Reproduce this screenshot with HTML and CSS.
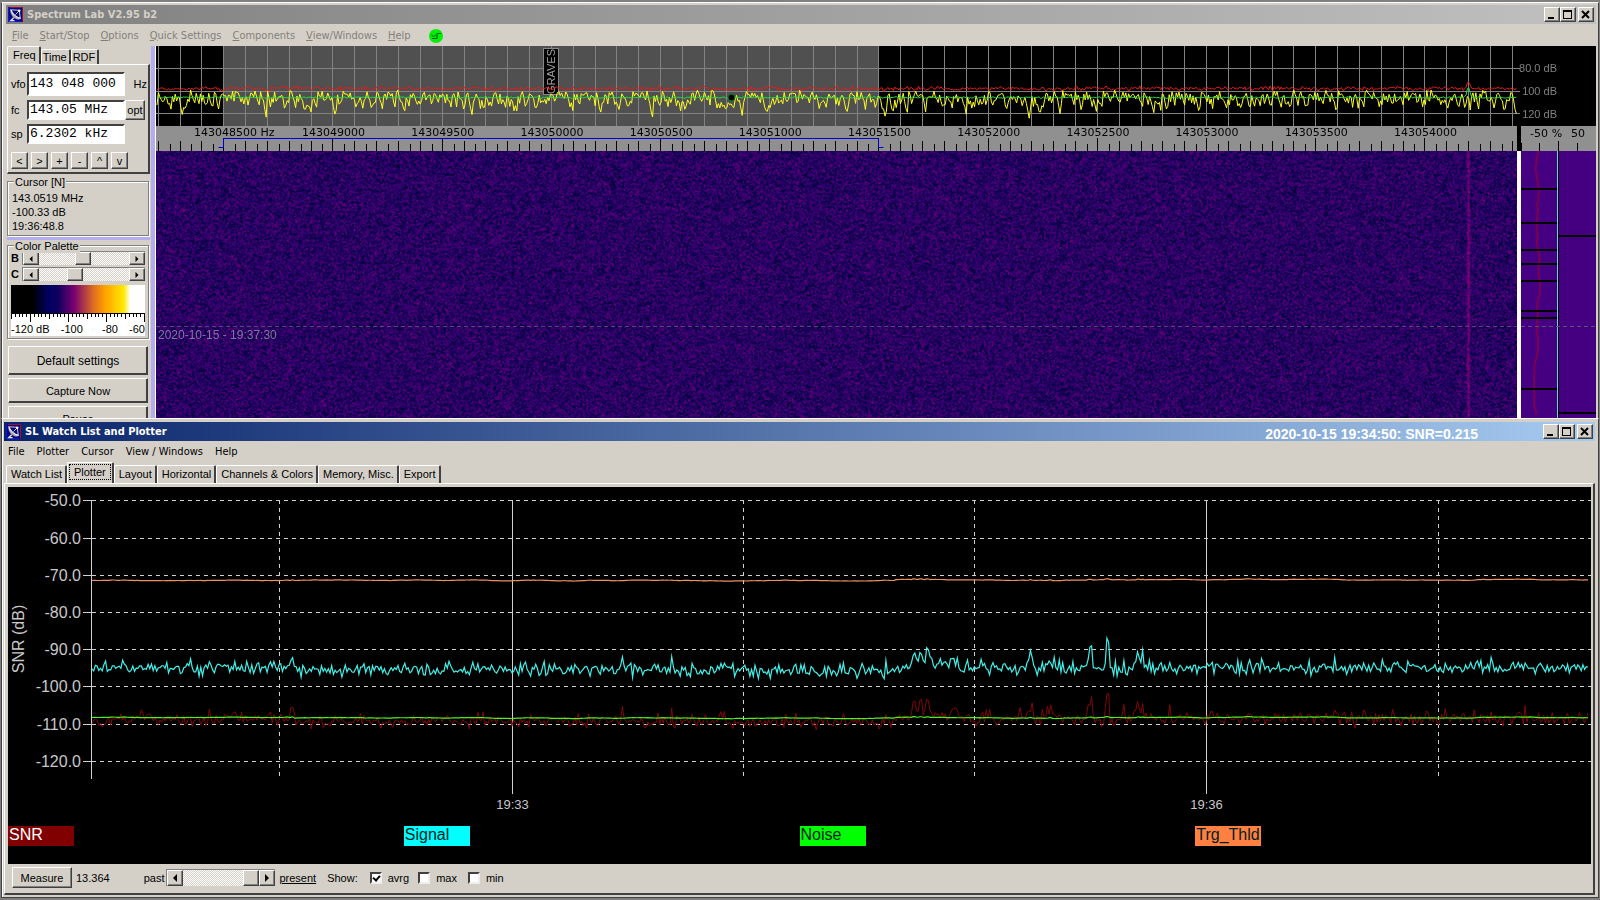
FILE: index.html
```html
<!DOCTYPE html>
<html lang="en">
<head>
<meta charset="utf-8">
<title>Spectrum Lab V2.95 b2</title>
<link rel="stylesheet" href="styles.css">
</head>
<body>
<svg class="defs" width="0" height="0" aria-hidden="true">
  <symbol id="dish" viewBox="0 0 16 16">
    <rect width="16" height="16" fill="#08087a"/>
    <path d="M2 .5h13.500v15" fill="none" stroke="#b01030"/>
    <path d="M.5 0v15.500H14" fill="none" stroke="#1414f0"/>
    <path d="M3 2c1 5 5 9.500 11 10-1 1.500-4 2-7 0S1.500 5 3 2z" fill="#a8a8a8"/>
    <path d="M3 2.500c1 4 5 8.500 10.500 9.500" fill="none" stroke="#f0f0f0" stroke-width="1.400"/>
    <path d="M6 11.500L3 14.500h4" fill="none" stroke="#e8e8e8" stroke-width="1.400"/>
    <path d="M8 8l4-4M4 3l8 .5 1 8" fill="none" stroke="#d8d8d8" stroke-width="1"/>
    <circle cx="12" cy="4" r="1.300" fill="#fff"/>
  </symbol>
  <symbol id="min" viewBox="0 0 12 11"><path d="M2 8h6v2H2z"/></symbol>
  <symbol id="max" viewBox="0 0 12 11"><path d="M1 1h9v9H1zM2 3v6h7V3z" fill-rule="evenodd"/></symbol>
  <symbol id="close" viewBox="0 0 12 11"><path d="M2 2l7 7M9 2L2 9" stroke="#000" stroke-width="2"/></symbol>
  <symbol id="left" viewBox="0 0 8 8"><path d="M6 0v8L2 4z"/></symbol>
  <symbol id="right" viewBox="0 0 8 8"><path d="M2 0v8l4-4z"/></symbol>
</svg>

<main class="desktop">
  <section class="window lab">
    <header class="titlebar inactive">
      <svg class="app-icon"><use href="#dish"/></svg>
      <h1>Spectrum Lab V2.95 b2</h1>
      <div class="win-buttons">
        <button aria-label="Minimize"><svg><use href="#min"/></svg></button>
        <button aria-label="Maximize"><svg><use href="#max"/></svg></button>
        <button class="close" aria-label="Close"><svg><use href="#close"/></svg></button>
      </div>
    </header>
    <nav class="menu muted">
      <a href="#"><u>F</u>ile</a><a href="#"><u>S</u>tart/Stop</a><a href="#"><u>O</u>ptions</a><a href="#"><u>Q</u>uick Settings</a><a href="#"><u>C</u>omponents</a><a href="#"><u>V</u>iew/Windows</a><a href="#"><u>H</u>elp</a>
      <svg class="status" viewBox="0 0 14 14"><circle cx="7" cy="7" r="7" fill="#0e0"/><path d="M2.500 5.500l2 2.500 2.500-2.500M3 9.500h5V4.500h4" fill="none" stroke="#053" stroke-width="1"/></svg>
    </nav>
    <div class="lab-body">
      <aside class="sidebar">
        <div class="tabs small">
          <button class="tab active">Freq</button><button class="tab">Time</button><button class="tab">RDF</button>
        </div>
        <div class="freq">
          <div class="field tall"><label for="vfo">vfo</label><input id="vfo" value="143 048 000"><span class="unit">Hz</span></div>
          <div class="field"><label for="fc">fc</label><input id="fc" value="143.05 MHz"><button class="btn opt">opt</button></div>
          <div class="field"><label for="sp">sp</label><input id="sp" value="6.2302 kHz"></div>
          <div class="steps">
            <button class="btn">&lt;</button><button class="btn">&gt;</button><button class="btn">+</button><button class="btn">-</button><button class="btn">^</button><button class="btn">v</button>
          </div>
        </div>
        <fieldset class="group cursor">
          <legend>Cursor [N]</legend>
          <p>143.0519 MHz</p><p>-100.33 dB</p><p>19:36:48.8</p>
        </fieldset>
        <fieldset class="group palette">
          <legend>Color Palette</legend>
          <div class="slider"><label for="b">B</label><div class="scroll"><button aria-label="Less brightness"><svg><use href="#left"/></svg></button><input id="b" type="range" value="49"><button aria-label="More brightness"><svg><use href="#right"/></svg></button></div></div>
          <div class="slider"><label for="c">C</label><div class="scroll"><button aria-label="Less contrast"><svg><use href="#left"/></svg></button><input id="c" type="range" value="38"><button aria-label="More contrast"><svg><use href="#right"/></svg></button></div></div>
          <div class="ramp"></div>
          <div class="scale">
            <canvas id="scale"></canvas>
            <div class="scale-text"><span>-120 dB</span><span>-100</span><span>-80</span><span>-60</span></div>
          </div>
        </fieldset>
        <div class="actions">
          <button class="btn default">Default settings</button>
          <button class="btn">Capture Now</button>
          <button class="btn">Pause</button>
        </div>
      </aside>
      <div class="analyzer">
        <div class="spectrum">
          <canvas id="spectrum"></canvas>
          <span class="marker">GRAVES</span>
          <ul class="levels"><li>80.0 dB</li><li>100 dB</li><li>120 dB</li></ul>
          <canvas id="traces"></canvas>
        </div>
        <div class="ruler">
          <canvas id="ruler"></canvas>
          <svg class="overlay">
            <text class="first" x="2.79%" y="10">143048500 Hz</text>
            <text x="13.05%" y="10">143049000</text><text x="21.07%" y="10">143049500</text>
            <text x="29.09%" y="10">143050000</text><text x="37.12%" y="10">143050500</text>
            <text x="45.14%" y="10">143051000</text><text x="53.16%" y="10">143051500</text>
            <text x="61.19%" y="10">143052000</text><text x="69.21%" y="10">143052500</text>
            <text x="77.23%" y="10">143053000</text><text x="85.26%" y="10">143053500</text>
            <text x="93.28%" y="10">143054000</text>
          </svg>
        </div>
        <div class="gap dark"></div>
        <div class="ruler">
          <svg class="overlay">
            <text x="18" y="11">-50</text><text x="36" y="11">%</text><text x="57" y="11">50</text>
            <path d="M.5 17v8M18.500 17v8M37.500 15v10M56.500 17v8" stroke="#000"/>
          </svg>
        </div>
        <div class="waterfall"><canvas id="waterfall"></canvas><time>2020-10-15 - 19:37:30</time></div>
        <div class="gap light"></div>
        <div class="phase"><canvas id="phase"></canvas></div>
      </div>
    </div>
  </section>

  <section class="window plotter">
    <header class="titlebar">
      <svg class="app-icon"><use href="#dish"/></svg>
      <h2>SL Watch List and Plotter</h2>
      <span class="readout">2020-10-15 19:34:50: SNR=0.215</span>
      <div class="win-buttons">
        <button aria-label="Minimize"><svg><use href="#min"/></svg></button>
        <button aria-label="Maximize"><svg><use href="#max"/></svg></button>
        <button class="close" aria-label="Close"><svg><use href="#close"/></svg></button>
      </div>
    </header>
    <nav class="menu">
      <a href="#">File</a><a href="#">Plotter</a><a href="#">Cursor</a><a href="#">View / Windows</a><a href="#">Help</a>
    </nav>
    <div class="tabs">
      <button class="tab">Watch List</button><button class="tab active focus"><span>Plotter</span></button><button class="tab">Layout</button><button class="tab">Horizontal</button><button class="tab">Channels &amp; Colors</button><button class="tab">Memory, Misc.</button><button class="tab">Export</button>
    </div>
    <div class="page">
      <div class="plot">
        <svg class="chart">
          <g class="grid">
            <path d="M75 13.500h9M75 51.500h9M75 88.500h9M75 125.500h9M75 162.500h9M75 199.500h9M75 237.500h9M75 274.500h9M83.500 13v279"/>
            <g class="dash">
              <line x1="84" x2="100%" y1="13.500" y2="13.500"/><line x1="84" x2="100%" y1="51.500" y2="51.500"/>
              <line x1="84" x2="100%" y1="88.500" y2="88.500"/><line x1="84" x2="100%" y1="125.500" y2="125.500"/>
              <line x1="84" x2="100%" y1="162.500" y2="162.500"/><line x1="84" x2="100%" y1="199.500" y2="199.500"/>
              <line x1="84" x2="100%" y1="237.500" y2="237.500"/><line x1="84" x2="100%" y1="274.500" y2="274.500"/>
              <line x1="17.150%" x2="17.150%" y1="13" y2="293"/><line x1="46.460%" x2="46.460%" y1="13" y2="293"/>
              <line x1="61.060%" x2="61.060%" y1="13" y2="293"/><line x1="90.370%" x2="90.370%" y1="13" y2="293"/>
            </g>
            <line x1="31.870%" x2="31.870%" y1="13" y2="307"/><line x1="75.710%" x2="75.710%" y1="13" y2="307"/>
          </g>
          <g class="db">
            <text x="73" y="19">-50.0</text><text x="73" y="57">-60.0</text><text x="73" y="94">-70.0</text><text x="73" y="131">-80.0</text>
            <text x="73" y="168">-90.0</text><text x="73" y="205">-100.0</text><text x="73" y="243">-110.0</text><text x="73" y="280">-120.0</text>
          </g>
          <text class="axis" transform="translate(16 152) rotate(-90)">SNR (dB)</text>
          <g class="times"><text x="31.870%" y="322">19:33</text><text x="75.710%" y="322">19:36</text></g>
        </svg>
        <canvas id="history"></canvas>
        <ul class="legend"><li class="snr">SNR</li><li class="signal">Signal</li><li class="noise">Noise</li><li class="thld">Trg_Thld</li></ul>
      </div>
      <footer class="controls">
        <button class="btn measure">Measure</button><output>13.364</output>
        <label class="past" for="pos">past</label>
        <div class="scroll big"><button aria-label="Back"><svg><use href="#left"/></svg></button><input id="pos" type="range" value="100"><button aria-label="Forward"><svg><use href="#right"/></svg></button></div>
        <a class="present" href="#">present</a>
        <span class="show">Show:</span>
        <label class="check"><input type="checkbox" checked>avrg</label>
        <label class="check"><input type="checkbox">max</label>
        <label class="check"><input type="checkbox">min</label>
      </footer>
    </div>
  </section>
</main>
<script src="plots.js"></script>
</body>
</html>
```
FILE: styles.css
```css
:root {
  --face: #d4d0c8;
  --shade: #808080;
  --dark: #404040;
  --lilac: #b4acf0;
  --ui: "DejaVu Sans Condensed", "DejaVu Sans", sans-serif;
  --form: "Liberation Sans", Arial, sans-serif;
}
* { box-sizing: border-box; margin: 0; padding: 0; }
body { font: 11px/14px var(--form); color: #000; background: var(--shade); overflow: hidden; }
button, input { font: inherit; color: inherit; border: 0; border-radius: 0; }
a { color: inherit; text-decoration: none; }
ul { list-style: none; }
canvas { display: block; width: 100%; height: 100%; }
.defs { position: absolute; }

.desktop { display: flex; flex-direction: column; height: 100vh; padding: 2px 1px 2px 1px; }
.window { background: var(--face); border: 1px solid var(--dark); border-top: 1px solid #fff; box-shadow: inset 1px 0 #fff; }
.lab { flex: 1; min-height: 0; display: flex; flex-direction: column; overflow: hidden; padding: 2px 2px 0 4px; border-bottom: 0; }
.plotter { flex: none; padding: 3px 3px 2px 2px; }

.titlebar { flex: none; display: flex; align-items: center; height: 19px; padding: 0 2px; color: #fff; background: linear-gradient(90deg, #0a246a, #a6caf0); }
.titlebar.inactive { color: #d4d0c8; background: linear-gradient(90deg, #808080, #c0c0c0); }
.titlebar h1, .titlebar h2 { font: bold 11px/14px var(--ui); padding-top: 1px; }
.app-icon { width: 15px; height: 15px; margin-right: 4px; }
.readout { font: bold 14px/18px var(--form); margin-left: auto; padding-top: 5px; padding-right: 65px; }
.inactive .win-buttons { margin-left: auto; }
.win-buttons { display: flex; }
.win-buttons button, .btn, .scroll button {
  background: var(--face);
  border: 1px solid; border-color: #fff var(--dark) var(--dark) #fff;
  box-shadow: inset -1px -1px var(--shade);
}
.win-buttons button { width: 16px; height: 15px; color: #000; display: flex; }
.win-buttons svg { width: 12px; height: 11px; margin: 1px; }
.win-buttons .close { margin-left: 2px; }

.menu { flex: none; display: flex; align-items: center; gap: 11px; height: 22px; padding: 1px 6px 0; font: 11px/14px var(--ui); }
.plotter .menu { padding: 1px 4px 0; height: 21px; gap: 12px; }
.muted { color: #848078; }
.status { width: 14px; height: 14px; margin-left: 7px; }

.tabs { display: flex; align-items: flex-end; height: 21px; padding-left: 2px; }
.tabs.small { height: 18px; padding-left: 0; }
.tab { height: 18px; padding: 0 3px 1px 4px; background: var(--face); border-top: 1px solid #fff; border-left: 1px solid #fff; border-right: 2px solid var(--dark); border-top-left-radius: 2px; border-top-right-radius: 2px; white-space: nowrap; }
.tab.active { height: 21px; padding-bottom: 4px; }
.small .tab { height: 15px; padding: 0 2px 0 1px; }
.small .tab.active { height: 18px; padding: 0 3px 2px 5px; }
.tab.focus { padding: 0 1px 2px 1px; }
.focus span { display: block; padding: 0 4px; border: 1px dotted #000; }

.lab-body { flex: 1; min-height: 0; display: flex; }
.sidebar { flex: none; width: 149px; background: var(--face); border-right: 4px solid var(--lilac); padding-left: 1px; padding-right: 1px; }
.freq { border: 1px solid #fff; border-right: 2px solid var(--dark); border-bottom: 2px solid var(--dark); padding: 7px 0 4px 3px; margin-bottom: 2px; height: 110px; }
.field { display: flex; align-items: center; height: 20px; margin-bottom: 4px; }
.field.tall { height: 24px; }
.field label { width: 16px; flex: none; }
.field input { flex: none; width: 98px; height: 100%; padding: 0 1px 2px 1px; background: #fff; font: 13px/16px "Liberation Mono", monospace; border: 2px solid; border-color: var(--dark) #fff #fff var(--dark); }
.unit { margin-left: auto; padding-right: 1px; }
.opt { width: 20px; height: 20px; }
.steps { display: flex; gap: 3px; padding-top: 4px; }
.steps .btn { width: 17px; height: 17px; line-height: 12px; }
.group { position: relative; min-width: 0; border: 1px solid var(--shade); box-shadow: 1px 1px #fff, inset 1px 1px #fff; margin-right: 1px; }
.group legend { position: absolute; top: -6px; left: 6px; padding: 0 1px; background: var(--face); line-height: 13px; }
.cursor { margin-top: 7px; padding: 9px 4px 2px; }
.cursor::after { content: ""; position: absolute; left: -1px; right: -2px; bottom: -5px; height: 3px; background: var(--lilac); }
.palette { margin-top: 9px; padding: 5px 3px 2px; }
.slider { display: flex; align-items: center; height: 14px; margin-bottom: 2px; }
.slider label { width: 11px; font-weight: bold; }
.scroll { flex: 1; min-width: 0; display: flex; height: 14px; border-top: 1px solid var(--shade); border-left: 1px solid var(--shade); }
.scroll button { flex: none; width: 16px; display: flex; align-items: center; justify-content: center; }
.scroll svg { width: 6px; height: 6px; }
.scroll input { appearance: none; flex: 1; min-width: 0; width: 0; height: 100%; background: repeating-conic-gradient(#fff 0 25%, var(--face) 0 50%) 0 0 / 2px 2px; }
.scroll input::-webkit-slider-thumb { appearance: none; width: 16px; height: 13px; background: var(--face); border: 1px solid; border-color: #fff var(--dark) var(--dark) #fff; box-shadow: inset -1px -1px var(--shade); }
.scroll.big { flex: none; width: 109px; height: 17px; }
.scroll.big svg { width: 8px; height: 8px; }
.scroll.big input::-webkit-slider-thumb { height: 16px; }
.ramp { height: 28px; margin-top: 4px; background: linear-gradient(90deg, #000 0 16%, #000060 28%, #100060 35%, #780070 47%, #e07020 62%, #ffa000 70%, #ffe800 84%, #fff 89%); }
.scale { height: 23px; background: #fff; }
.scale canvas { height: 9px; }
.scale-text { display: flex; justify-content: space-between; line-height: 14px; }
.scale-text span:nth-child(3) { margin-left: 8px; }
.actions { display: flex; flex-direction: column; gap: 3px; padding: 7px 2px 0 1px; }
.actions .btn { flex: none; height: 25px; line-height: 14px; box-shadow: inset -1px -1px var(--dark); }
.actions .default { height: 29px; font-size: 12px; }

.analyzer { flex: 1; min-width: 0; display: grid; grid-template-columns: minmax(0, 1fr) 4px 75px; grid-template-rows: 80px 25px minmax(0, 1fr); border-left: 1px solid #fff; }
.spectrum { grid-column: 1 / -1; position: relative; background: #000; }
#traces { position: absolute; inset: 0; }
.marker { position: absolute; left: 26.9%; top: 2px; height: 47px; width: 16px; writing-mode: vertical-rl; transform: rotate(180deg); color: #a0a0a0; background: #000; border: 1px solid #888; line-height: 14px; }
.levels { position: absolute; right: 39px; top: 15px; color: #808080; text-align: right; }
.levels li { height: 23px; }
.ruler { position: relative; background: #909090; }
.overlay { position: absolute; inset: 0; width: 100%; height: 100%; font: 11px "DejaVu Sans", sans-serif; text-anchor: middle; }
.first { text-anchor: start; }
.dark { background: #000; }
.light { background: #fff; }
.waterfall { position: relative; }
.waterfall time { position: absolute; left: 2px; top: 177px; font-size: 12px; color: #8078a0; }

.page { border-top: 1px solid #fff; border-left: 1px solid #fff; border-right: 2px solid var(--dark); border-bottom: 2px solid var(--dark); padding: 3px 2px 0 3px; }
.plot { position: relative; background: #000; padding-bottom: 18px; }
.chart { display: block; width: 100%; height: 339px; fill: #c8c8c8; }
.grid { stroke: #d0d0d0; fill: none; }
.grid line { shape-rendering: crispEdges; }
.dash { stroke-dasharray: 4 4; }
.db { font-size: 16px; text-anchor: end; }
.axis { font-size: 16px; text-anchor: middle; }
.times { font-size: 13px; text-anchor: middle; }
#history { position: absolute; left: 0; top: 0; height: 339px; }
.legend { display: grid; grid-template-columns: repeat(4, 1fr); font-size: 16px; line-height: 17px; color: #002020; }
.legend li { width: 66px; height: 20px; padding-left: 1px; }
.snr { background: #800000; color: #fff; }
.signal { background: #0ff; }
.noise { background: #0f0; }
.thld { background: #ff8040; }
.controls { display: flex; align-items: center; height: 29px; padding: 0 4px 2px; }
.measure { width: 60px; height: 21px; margin-right: 4px; }
.past { margin-left: 34px; margin-right: 2px; }
.present { margin: 0 11px 0 4px; text-decoration: underline; }
.show { margin-right: 12px; }
.check { display: flex; align-items: center; gap: 6px; margin-right: 9px; }
.check:nth-last-child(2) { margin-right: 11px; }
.check input { appearance: none; position: relative; width: 12px; height: 12px; background: #fff; border: 2px solid; border-color: var(--dark) #eee #eee var(--dark); }
.check input:checked::after { content: ""; position: absolute; left: 2px; top: 0; width: 3px; height: 5px; border: solid #000; border-width: 0 2px 2px 0; transform: rotate(40deg); }
```
FILE: plots.js
```js
let seed = 7;
function rnd() {
  seed = (seed * 1664525 + 1013904223) >>> 0;
  return seed / 4294967296;
}
const gauss = () => rnd() + rnd() + rnd() + rnd() - 2;

function open(id) {
  const c = document.getElementById(id);
  c.width = c.clientWidth;
  c.height = c.clientHeight;
  return { g: c.getContext('2d'), w: c.width, h: c.height };
}
function line(g, color, pts, width = 1) {
  g.strokeStyle = color;
  g.lineWidth = width;
  g.beginPath();
  pts.forEach(([x, y]) => g.lineTo(x, y));
  g.stroke();
}

// 62.3 divisions of 100 Hz cover the displayed span
const RIGHT = 79;
const divX = (w, n) => Math.round(w * (0.0013 + n * 0.016047)) + 0.5;

function drawSpectrum() {
  const { g, w, h } = open('spectrum');
  const span = w - RIGHT;
  g.fillStyle = '#505050';
  g.fillRect(divX(span, 3), 0, divX(span, 33) - divX(span, 3), h);
  for (let n = 0; n <= 62; n++) line(g, '#828282', [[divX(span, n), 0], [divX(span, n), h]]);
  [22.5, 45.5, 67.5].forEach(y => line(g, '#828282', [[0, y], [span + 3, y]]));
}

function drawTraces() {
  const { g, w } = open('traces');
  const span = w - RIGHT, peak = span * 0.9643;
  const bump = (x, a) => a * Math.exp(-Math.pow((x - peak) / 2, 2));
  const red = [], green = [], yellow = [];
  let s = 0.5;
  for (let x = 1; x < span; x += 1.4) {
    s = 0.25 * s + 0.75 * -Math.log(1 - rnd() * 0.995);
    const y = 51 - 7.6 * Math.log(s + 0.02);
    yellow.push([x, Math.min(78, Math.max(44 + rnd() * 5, y)) - bump(x, 14)]);
    red.push([x, 42.5 + gauss() * 1.8 - bump(x, 6)]);
    green.push([x, 51.5 + gauss() * 0.7 - bump(x, 11)]);
  }
  line(g, '#f01818', red);
  line(g, '#ffff20', yellow);
  line(g, '#20e040', green);
  g.fillStyle = '#000';
  g.strokeStyle = '#108030';
  g.beginPath();
  g.arc(span * 0.4228, 51.5, 3.5, 0, 7);
  g.fill();
  g.stroke();
}

function drawRuler() {
  const { g, w, h } = open('ruler');
  for (let n = 0; n <= 62; n++) {
    const x = divX(w, n), half = Math.round((x + divX(w, n + 1)) / 2) + 0.5;
    line(g, '#000', [[x, (n + 2) % 5 ? 15 : 12], [x, h]]);
    if (half < w) line(g, '#000', [[half, 18], [half, h]]);
  }
  const a = divX(w, 3), b = divX(w, 33);
  line(g, '#0000d0', [[a - 5, 21.5], [a, 21.5], [a, 12.5], [b, 12.5], [b, 21.5], [b + 5, 21.5]]);
}

function drawWaterfall() {
  const { g, w, h } = open('waterfall');
  const img = g.createImageData(w, h);
  const raw = new Float32Array(w * h + w + 2);
  for (let i = 0; i < raw.length; i++) raw[i] = gauss();
  const px = Math.round(w * 0.9643);
  for (let y = 0; y < h; y++) for (let x = 0; x < w; x++) {
    const i = y * w + x;
    let v = 0.43 + 0.17 * (raw[i] + raw[i + 1] * 0.8 + raw[i + w] * 0.7 + raw[i + w + 1] * 0.6);
    const d = Math.abs(x - px);
    if (d < 3) v += [0.6, 0.42, 0.12][d] * (0.6 + 0.4 * rnd());
    v = Math.max(0, Math.min(1.2, v));
    const o = i * 4;
    img.data[o] = v < 0.25 ? 4 + v * 40 : 14 + (v - 0.25) * 140;
    img.data[o + 1] = 0;
    img.data[o + 2] = v < 0.5 ? 48 + v * 124 : 110;
    img.data[o + 3] = 255;
  }
  g.putImageData(img, 0, 0);
  g.setLineDash([4, 3]);
  line(g, '#504a70', [[0, 175.5], [w, 175.5]]);
}

function drawPhase() {
  const { g, w, h } = open('phase');
  g.fillStyle = '#440080';
  g.fillRect(0, 0, w, h);
  const wob = [];
  let x = 17;
  for (let y = 0; y < h; y += 3) {
    x = Math.max(13, Math.min(19, x + gauss() * 1.4));
    wob.push([x, y]);
  }
  line(g, '#7a0050', wob, 2);
  g.fillStyle = '#000';
  [37, 71, 98, 112, 129, 159, 166, 237].forEach(y => g.fillRect(0, y, 36, 2));
  [84, 261].forEach(y => g.fillRect(38, y, w - 38, 2));
  line(g, '#70d0e0', [[36.5, 0], [36.5, h]]);
  line(g, '#000', [[37.5, 0], [37.5, h]]);
  g.setLineDash([4, 3]);
  line(g, '#5a5478', [[0, 175.5], [w, 175.5]]);
}

function drawScale() {
  const { g, w } = open('scale');
  line(g, '#000', [[0, 0.5], [w, 0.5]]);
  for (let n = 0; n <= 35; n++) {
    const x = Math.round(n * 3.8) + 0.5, m = (n + 5) % 10;
    line(g, '#000', [[Math.min(x, w - 0.5), 0], [Math.min(x, w - 0.5), m === 0 ? 9 : m === 5 ? 6 : 4]]);
  }
}

// bursts: [fraction of plot width, height in pixels]
const BURSTS = [[0.1799, 12], [0.5725, 14], [0.5765, 16], [0.581, 17], [0.597, 7], [0.6456, 12], [0.6583, 12], [0.6835, 20], [0.6945, 30], [0.7136, 15], [0.7165, 12]];

function drawHistory() {
  const { g, w } = open('history');
  const cyan = [], red = [], green = [], orange = [];
  let slow = 0;
  for (let x = 84; x < w - 2; x += 1.7) {
    let b = 0;
    BURSTS.forEach(([p, a]) => { b = Math.max(b, a * Math.exp(-Math.pow((x - p * w) / 2, 2))); });
    const f = x / w;
    const base = f < 0.18 ? 181 : f < 0.56 ? 183.5 : f > 0.57 && f < 0.6 ? 177 : 181;
    slow = slow * 0.95 + gauss() * 0.16;
    const spike = rnd() > 0.9 ? rnd() * 9 : 0;
    cyan.push([x, base + gauss() * 5.5 - spike - b]);
    red.push([x, base + 51 + gauss() * 6 - spike * 1.2 - b]);
    const lift = b > 8 ? 0.6 : 0;
    green.push([x, 230.5 + slow - lift + (f > 0.18 && f < 0.56 ? 0.6 : 0)]);
    orange.push([x, 93.5 + slow - lift - (f > 0.56 ? 0.8 : 0)]);
  }
  line(g, '#800808', red);
  line(g, '#40f0e8', cyan, 1.2);
  line(g, '#50f020', green, 1.2);
  line(g, '#f09060', orange, 1.2);
}

function drawAll() {
  seed = 7;
  drawSpectrum();
  drawTraces();
  drawRuler();
  drawWaterfall();
  drawPhase();
  drawScale();
  drawHistory();
}
drawAll();
addEventListener('resize', drawAll);
```
